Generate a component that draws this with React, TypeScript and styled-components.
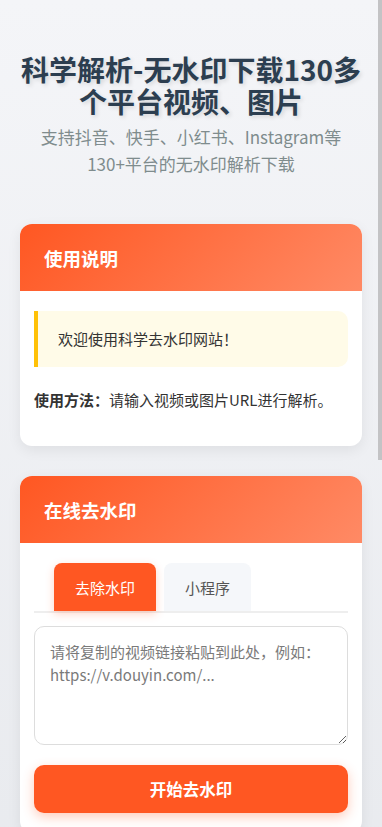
import { useState } from "react";
import styled, { createGlobalStyle } from "styled-components";

const GlobalStyle = createGlobalStyle`
  html {
    scrollbar-width: none;
  }
  html::-webkit-scrollbar {
    display: none;
  }
  body {
    margin: 0;
    font-family: "Noto Sans CJK SC", "Noto Sans", sans-serif;
    background: linear-gradient(180deg, #f4f5f8 0%, #e8eaee 100%);
    min-height: 100vh;
    color: #333;
  }
`;

const Page = styled.div`
  padding: 0 20px 40px;
`;

const Header = styled.header`
  padding-top: 54px;
  text-align: center;
  margin-bottom: 47px;
`;

const Title = styled.h1`
  margin: 0;
  font-size: 28px;
  line-height: 31.5px;
  font-weight: 700;
  color: #2c3e50;
  text-shadow: 2px 2px 4px rgba(0, 0, 0, 0.12);
`;

const Subtitle = styled.p`
  margin: 6px 0 0;
  font-size: 17px;
  line-height: 27px;
  color: #7f8c8d;
`;

const Card = styled.section`
  background: #fff;
  border-radius: 12px;
  box-shadow: 0 4px 14px rgba(0, 0, 0, 0.07);
  overflow: hidden;
  margin-bottom: 30px;
`;

const CardHeader = styled.div`
  background: linear-gradient(135deg, #ff5722 0%, #ff8a65 100%);
  padding: 20px 24px;
  height: 67px;
  box-sizing: border-box;
  display: flex;
  align-items: center;
  color: #fff;
  font-size: 18.5px;
  font-weight: 700;
`;

const CardBody = styled.div<{ $bottom?: number }>`
  padding: 20px 14px ${(p) => p.$bottom ?? 20}px;
`;

const Notice = styled.div`
  background: #fffbe8;
  border-left: 4px solid #ffc107;
  border-radius: 0 10px 10px 0;
  padding: 16px 20px;
  font-size: 15px;
  line-height: 24px;
  color: #333;
`;

const Usage = styled.p`
  margin: 21px 0 0;
  font-size: 15px;
  line-height: 24px;
  color: #333;

  strong {
    font-weight: 700;
  }
`;

const TabList = styled.div`
  display: flex;
  gap: 8px;
  padding: 0 20px;
  border-bottom: 2px solid #eeeeee;
`;

const Tab = styled.button<{ $active?: boolean }>`
  border: none;
  font-family: inherit;
  font-size: 15px;
  height: 48px;
  padding: 0 21px;
  border-radius: 8px 8px 0 0;
  cursor: pointer;
  background: ${(p) => (p.$active ? "#ff5722" : "#f5f7fa")};
  color: ${(p) => (p.$active ? "#fff" : "#555")};
  box-shadow: ${(p) => (p.$active ? "0 3px 8px rgba(255, 87, 34, 0.25)" : "none")};
`;

const UrlInput = styled.textarea`
  display: block;
  width: 100%;
  box-sizing: border-box;
  margin-top: 13px;
  height: 119px;
  padding: 14px 15px;
  border: 1px solid #dddddd;
  border-radius: 10px;
  font-family: inherit;
  font-size: 15px;
  line-height: 22.5px;
  color: #333;
  outline: none;

  &::placeholder {
    color: #7a7a7a;
  }
`;

const SubmitButton = styled.button`
  display: block;
  width: 100%;
  height: 48px;
  margin-top: 20px;
  border: none;
  border-radius: 10px;
  background: #ff5722;
  color: #fff;
  font-family: inherit;
  font-size: 16.5px;
  font-weight: 700;
  cursor: pointer;
  box-shadow: 0 4px 12px rgba(255, 87, 34, 0.3);
`;

const ScrollThumb = styled.div`
  position: fixed;
  top: 0;
  right: 0;
  width: 4px;
  height: 460px;
  background: #c3c3c5;
`;

const App = () => {
  const [tab, setTab] = useState("remove");
  const [url, setUrl] = useState("");

  return (
    <>
      <GlobalStyle />
      <Page>
        <Header>
          <Title>科学解析-无水印下载130多个平台视频、图片</Title>
          <Subtitle>
            支持抖音、快手、小红书、Instagram等
            <br />
            130+平台的无水印解析下载
          </Subtitle>
        </Header>

        <Card>
          <CardHeader>使用说明</CardHeader>
          <CardBody $bottom={34}>
            <Notice>欢迎使用科学去水印网站！</Notice>
            <Usage>
              <strong>使用方法：</strong>请输入视频或图片URL进行解析。
            </Usage>
          </CardBody>
        </Card>

        <Card>
          <CardHeader>在线去水印</CardHeader>
          <CardBody>
            <TabList>
              <Tab $active={tab === "remove"} onClick={() => setTab("remove")}>
                去除水印
              </Tab>
              <Tab $active={tab === "mini"} onClick={() => setTab("mini")}>
                小程序
              </Tab>
            </TabList>
            <UrlInput
              value={url}
              onChange={(e) => setUrl(e.target.value)}
              placeholder={"请将复制的视频链接粘贴到此处，例如：https://v.douyin.com/..."}
            />
            <SubmitButton>开始去水印</SubmitButton>
          </CardBody>
        </Card>
      </Page>
      <ScrollThumb />
    </>
  );
};

export default App;
